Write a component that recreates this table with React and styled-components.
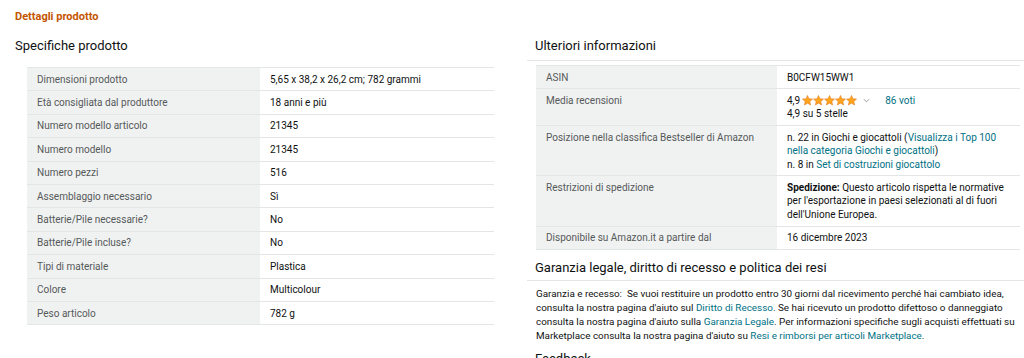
import React from 'react';
import styled, { createGlobalStyle } from 'styled-components';

const GlobalStyle = createGlobalStyle`
    body {
        margin: 0;
        background: #ffffff;
        font-family: Roboto, "Liberation Sans", Arial, sans-serif;
        color: #0f1111;
    }
`;

const Page = styled.div`
        width: 1024px;
        height: 358px;
        overflow: hidden;
        box-sizing: border-box;
        padding: 10px 0 0 15px;
`;

const Title = styled.h2`
        margin: 0;
        font-size: 11px;
        line-height: 14px;
        font-weight: 700;
        color: #c45500;
`;

const Columns = styled.div`
        display: grid;
        grid-template-columns: 479px 497px;
        column-gap: 33px;
        margin-top: 13px;
`;

const Column = styled.div`
        display: flex;
        flex-direction: column;
`;

const Heading = styled.h3`
        margin: ${props => props.top || 0}px 0 0 0;
        font-size: 13px;
        line-height: 18px;
        font-weight: 400;
        color: #0f1111;
        padding-left: ${props => props.inset || 0}px;
        padding-bottom: ${props => props.underline || 0}px;
        border-bottom: ${props => props.underline ? '1px solid #e3e6e6' : 'none'};
`;

const Table = styled.table`
        border-collapse: collapse;
        width: ${props => props.width}px;
        margin-left: ${props => props.inset}px;
        margin-top: ${props => props.gap}px;
        font-size: 10px;
        line-height: 13.4px;
        border-bottom: 1px solid #e3e6e6;
`;

const Row = styled.tr`
        border-top: 1px solid #e3e6e6;
`;

const Label = styled.th`
        width: ${props => props.width}px;
        text-align: left;
        vertical-align: top;
        font-weight: 400;
        color: #565959;
        background: #f0f2f2;
        padding: 4.5px 10px;
        box-sizing: border-box;
`;

const Value = styled.td`
        vertical-align: top;
        color: #0f1111;
        padding: 4.5px 10px;
`;

const Link = styled.a`
        color: #007185;
        text-decoration: none;
`;

const Strong = styled.b`
        font-weight: 700;
`;

const Rating = styled.div`
        display: flex;
        align-items: center;
`;

const Stars = styled.span`
        display: inline-flex;
        margin-left: 2px;
`;

const Chevron = styled.span`
        display: inline-flex;
        margin: 0 15px 0 6px;
        color: #888c8c;
`;

const Paragraph = styled.p`
        margin: 6px 0 0 9px;
        font-size: 9.9px;
        line-height: 14px;
        color: #0f1111;
`;

const Star = () => (
    <svg width="11" height="11" viewBox="0 0 24 24">
        <path
            d="M12 1l3.2 7.1 7.8.8-5.9 5.2 1.7 7.7L12 17.8l-6.8 4 1.7-7.7L1 8.9l7.8-.8z"
            fill="#ffa41c"
            stroke="#de7921"
            strokeWidth="1.2"
            strokeLinejoin="round"
        />
    </svg>
);

const specs = [
    ['Dimensioni prodotto', '5,65 x 38,2 x 26,2 cm; 782 grammi'],
    ['Età consigliata dal produttore', '18 anni e più'],
    ['Numero modello articolo', '21345'],
    ['Numero modello', '21345'],
    ['Numero pezzi', '516'],
    ['Assemblaggio necessario', 'Sì'],
    ['Batterie/Pile necessarie?', 'No'],
    ['Batterie/Pile incluse?', 'No'],
    ['Tipi di materiale', 'Plastica'],
    ['Colore', 'Multicolour'],
    ['Peso articolo', '782 g'],
];

const App = () => {
    return (
        <Page>
            <GlobalStyle />
            <Title>Dettagli prodotto</Title>
            <Columns>
                <Column>
                    <Heading>Specifiche prodotto</Heading>
                    <Table width={467} inset={12} gap={12}>
                        <tbody>
                            {specs.map(([k, v]) => (
                                <Row key={k}>
                                    <Label width={233}>{k}</Label>
                                    <Value>{v}</Value>
                                </Row>
                            ))}
                        </tbody>
                    </Table>
                </Column>
                <Column>
                    <Heading underline={5} inset={8}>Ulteriori informazioni</Heading>
                    <Table width={484} inset={9} gap={4}>
                        <tbody>
                            <Row>
                                <Label width={241}>ASIN</Label>
                                <Value>B0CFW15WW1</Value>
                            </Row>
                            <Row>
                                <Label width={241}>Media recensioni</Label>
                                <Value>
                                    <Rating>
                                        <span>4,9</span>
                                        <Stars>
                                            <Star /><Star /><Star /><Star /><Star />
                                        </Stars>
                                        <Chevron>
                                            <svg width="7" height="5" viewBox="0 0 8 5">
                                                <path d="M1 1l3 3 3-3" fill="none" stroke="currentColor" strokeWidth="1" />
                                            </svg>
                                        </Chevron>
                                        <Link>86 voti</Link>
                                    </Rating>
                                    4,9 su 5 stelle
                                </Value>
                            </Row>
                            <Row>
                                <Label width={241}>Posizione nella classifica Bestseller di Amazon</Label>
                                <Value>
                                    n. 22 in Giochi e giocattoli (<Link>Visualizza i Top 100 nella categoria Giochi e giocattoli</Link>)
                                    <br />
                                    n. 8 in <Link>Set di costruzioni giocattolo</Link>
                                </Value>
                            </Row>
                            <Row>
                                <Label width={241}>Restrizioni di spedizione</Label>
                                <Value>
                                    <Strong>Spedizione:</Strong> Questo articolo rispetta le normative per l'esportazione in paesi selezionati al di fuori dell'Unione Europea.
                                </Value>
                            </Row>
                            <Row>
                                <Label width={241}>Disponibile su Amazon.it a partire dal</Label>
                                <Value>16 dicembre 2023</Value>
                            </Row>
                        </tbody>
                    </Table>
                    <Heading underline={3} inset={8} top={9}>Garanzia legale, diritto di recesso e politica dei resi</Heading>
                    <Paragraph>
                        Garanzia e recesso:&nbsp; Se vuoi restituire un prodotto entro 30 giorni dal ricevimento perché hai cambiato idea, consulta la nostra pagina d'aiuto sul <Link>Diritto di Recesso</Link>. Se hai ricevuto un prodotto difettoso o danneggiato consulta la nostra pagina d'aiuto sulla <Link>Garanzia Legale</Link>. Per informazioni specifiche sugli acquisti effettuati su Marketplace consulta la nostra pagina d'aiuto su <Link>Resi e rimborsi per articoli Marketplace</Link>.
                    </Paragraph>
                    <Heading inset={8} top={7}>Feedback</Heading>
                </Column>
            </Columns>
        </Page>
    );
};

export default App;
